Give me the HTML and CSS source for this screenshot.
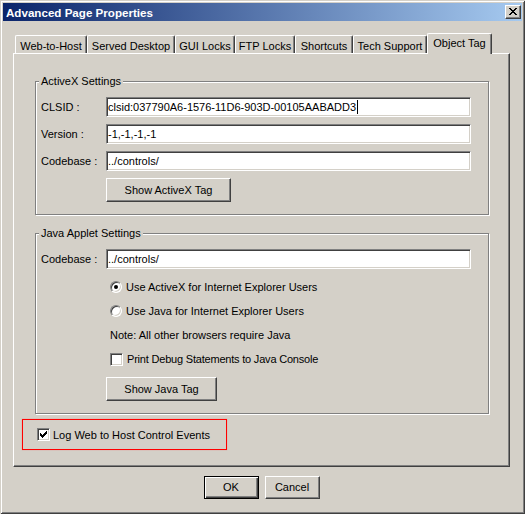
FILE: index.html
```
<!DOCTYPE html>
<html>
<head>
<meta charset="utf-8">
<title>Advanced Page Properties</title>
<link rel="stylesheet" href="styles.css">
</head>
<body>
<div class="window">
  <div class="titlebar">
    <span class="title">Advanced Page Properties</span>
    <div class="close">
      <svg width="8" height="7" viewBox="0 0 8 7" shape-rendering="crispEdges"><path fill="#000" d="M0 0h2v1h-2z M6 0h2v1h-2z M1 1h2v1h-2z M5 1h2v1h-2z M2 2h4v1h-4z M3 3h2v1h-2z M2 4h4v1h-4z M1 5h2v1h-2z M5 5h2v1h-2z M0 6h2v1h-2z M6 6h2v1h-2z"/></svg>
    </div>
  </div>
  <div class="client">
    <div class="tabs">
      <div class="tab t1">Web-to-Host</div>
      <div class="tab t2">Served Desktop</div>
      <div class="tab t3">GUI Locks</div>
      <div class="tab t4">FTP Locks</div>
      <div class="tab t5">Shortcuts</div>
      <div class="tab t6">Tech Support</div>
      <div class="tab sel t7">Object Tag</div>
    </div>
    <div class="panel">
      <fieldset class="group gx">
        <legend>ActiveX Settings</legend>
        <div class="gbody">
          <div class="row"><span class="lbl">CLSID :</span><div class="field">clsid:037790A6-1576-11D6-903D-00105AABADD3<span class="caret"></span></div></div>
          <div class="row"><span class="lbl">Version :</span><div class="field">-1,-1,-1,-1</div></div>
          <div class="row"><span class="lbl">Codebase :</span><div class="field">../controls/</div></div>
          <div class="row"><div class="btn push bx">Show ActiveX Tag</div></div>
        </div>
      </fieldset>
      <fieldset class="group gj">
        <legend>Java Applet Settings</legend>
        <div class="gbody">
          <div class="row first"><span class="lbl">Codebase :</span><div class="field">../controls/</div></div>
          <div class="opt"><span class="radio on"></span>Use ActiveX for Internet Explorer Users</div>
          <div class="opt"><span class="radio"></span>Use Java for Internet Explorer Users</div>
          <div class="opt note">Note: All other browsers require Java</div>
          <div class="opt"><span class="check"></span><span class="tight">Print Debug Statements to Java Console</span></div>
          <div class="row last"><div class="btn push bj">Show Java Tag</div></div>
        </div>
      </fieldset>
      <div class="logbox">
        <span class="check on"><svg width="7" height="7" viewBox="0 0 7 7" shape-rendering="crispEdges"><path fill="#000" d="M6 0h1v1h-1z M5 1h2v1h-2z M0 2h1v1h-1z M4 2h3v1h-3z M0 3h2v1h-2z M3 3h3v1h-3z M0 4h5v1h-5z M1 5h3v1h-3z M2 6h1v1h-1z"/></svg></span>
        <span>Log Web to Host Control Events</span>
      </div>
    </div>
    <div class="actions">
      <div class="btn dlg default">OK</div>
      <div class="btn dlg">Cancel</div>
    </div>
  </div>
</div>
</body>
</html>
```
FILE: styles.css
```
html, body {
  margin: 0;
  padding: 0;
  background: #D4D0C8;
}
body {
  width: 525px;
  height: 514px;
  overflow: hidden;
  font-family: "Liberation Sans", Arial, sans-serif;
  font-size: 11px;
  color: #000;
}
.window {
  box-sizing: border-box;
  width: 525px;
  height: 514px;
  padding: 3px;
  background: #D4D0C8;
  box-shadow: inset 1px 1px 0 #D4D0C8, inset -1px -1px 0 #404040, inset 2px 2px 0 #fff, inset -2px -2px 0 #808080;
}
.titlebar {
  height: 18px;
  display: flex;
  align-items: center;
  justify-content: space-between;
  padding: 0 1px 0 3px;
  background: linear-gradient(to right, #0A246A, #A6CAF0);
}
.title {
  color: #fff;
  font-weight: bold;
  font-size: 11.6px;
  line-height: 13px;
}
.close {
  box-sizing: border-box;
  width: 16px;
  height: 14px;
  background: #D4D0C8;
  border: 1px solid;
  border-color: #fff #404040 #404040 #fff;
  box-shadow: inset -1px -1px 0 #808080;
  display: flex;
  align-items: center;
  justify-content: center;
  padding: 0 1px 1px 0;
}
.close svg { display: block; }
.client {
  padding: 12px 12px 0 10px;
}
.tabs {
  display: flex;
  align-items: flex-end;
  height: 21px;
  padding-left: 2px;
  margin-bottom: -1px;
  position: relative;
  z-index: 1;
}
.tab {
  box-sizing: border-box;
  height: 18px;
  margin-bottom: 1px;
  border-top: 1px solid #fff;
  border-left: 1px solid #fff;
  border-right: 1px solid #404040;
  border-radius: 2px 2px 0 0;
  box-shadow: inset -1px 0 0 #808080;
  padding-top: 4px;
  line-height: 13px;
  text-align: center;
  white-space: nowrap;
  background: #D4D0C8;
}
.tab.sel {
  height: 21px;
  margin-bottom: 0;
  padding-top: 3px;
}
.t1 { width: 72px; }
.t2 { width: 88px; }
.t3 { width: 60px; }
.t4 { width: 60px; }
.t5 { width: 58px; }
.t6 { width: 74px; }
.t7 { width: 65px; }
.panel {
  box-sizing: border-box;
  height: 414px;
  border-top: 1px solid #fff;
  border-left: 1px solid #fff;
  border-right: 1px solid #404040;
  border-bottom: 1px solid #404040;
  box-shadow: inset -1px -1px 0 #808080;
  padding-top: 21px;
}
.group {
  box-sizing: border-box;
  width: 454px;
  margin: 0 0 0 21px;
  padding: 0;
  min-width: 0;
  border: 1px solid #808080;
  box-shadow: 1px 1px 0 #fff, inset 1px 1px 0 #fff;
}
.gj { margin-top: 12px; }
.group legend {
  margin-left: 3px;
  padding: 0 2px;
  line-height: 13px;
  background: #D4D0C8;
}
.gbody {
  display: flex;
  flex-direction: column;
  gap: 7px;
  padding: 9px 16px 12px 5px;
}
.gj .gbody { gap: 0; }
.row {
  display: flex;
  align-items: center;
  height: 20px;
}
.gx .row:last-child { height: 24px; }
.gj .row.first { margin-bottom: 6px; }
.gj .row.last { height: 24px; margin-top: 6px; }
.lbl {
  width: 65px;
  flex: none;
}
.field {
  box-sizing: border-box;
  width: 365px;
  height: 20px;
  background: #fff;
  border: 1px solid;
  border-color: #808080 #fff #fff #808080;
  box-shadow: inset 1px 1px 0 #404040, inset -1px -1px 0 #D4D0C8;
  padding-left: 1px;
  line-height: 18px;
  white-space: nowrap;
  display: flex;
  align-items: center;
}
.caret {
  display: inline-block;
  width: 1px;
  height: 14px;
  background: #000;
  margin-left: 1px;
}
.btn {
  box-sizing: border-box;
  background: #D4D0C8;
  border: 1px solid;
  border-color: #fff #404040 #404040 #fff;
  box-shadow: inset -1px -1px 0 #808080;
  display: flex;
  align-items: center;
  justify-content: center;
  white-space: nowrap;
}
.push {
  height: 24px;
  margin-left: 65px;
  padding-bottom: 1px;
}
.bx { width: 125px; }
.bj { width: 111px; }
.opt {
  display: flex;
  align-items: center;
  height: 24px;
  padding-left: 69px;
  gap: 4px;
}
.tight { letter-spacing: -0.2px; }
.radio {
  box-sizing: border-box;
  width: 12px;
  height: 12px;
  border-radius: 50%;
  background: #fff;
  border: 1px solid;
  border-color: #808080 #fff #fff #808080;
  box-shadow: inset 1px 1px 0 #404040, inset -1px -1px 0 #D4D0C8;
  display: flex;
  align-items: center;
  justify-content: center;
  flex: none;
}
.radio.on::after {
  content: "";
  width: 4px;
  height: 4px;
  border-radius: 50%;
  background: #000;
}
.check {
  box-sizing: border-box;
  width: 13px;
  height: 13px;
  background: #fff;
  border: 1px solid;
  border-color: #808080 #fff #fff #808080;
  box-shadow: inset 1px 1px 0 #404040, inset -1px -1px 0 #D4D0C8;
  display: flex;
  align-items: center;
  justify-content: center;
  flex: none;
}
.check svg { display: block; }
.logbox {
  box-sizing: border-box;
  width: 205px;
  height: 31px;
  margin: 5px 0 0 8px;
  border: 1px solid #f00;
  box-shadow: 0 0 1px rgba(255, 80, 80, 0.6);
  display: flex;
  align-items: center;
  gap: 3px;
  padding-left: 14px;
}
.actions {
  display: flex;
  justify-content: center;
  gap: 6px;
  margin-top: 9px;
}
.dlg {
  width: 55px;
  height: 23px;
  padding-bottom: 1px;
}
.dlg.default {
  border: 1px solid #000;
  box-shadow: inset 1px 1px 0 #fff, inset -1px -1px 0 #404040, inset -2px -2px 0 #808080;
}
```
